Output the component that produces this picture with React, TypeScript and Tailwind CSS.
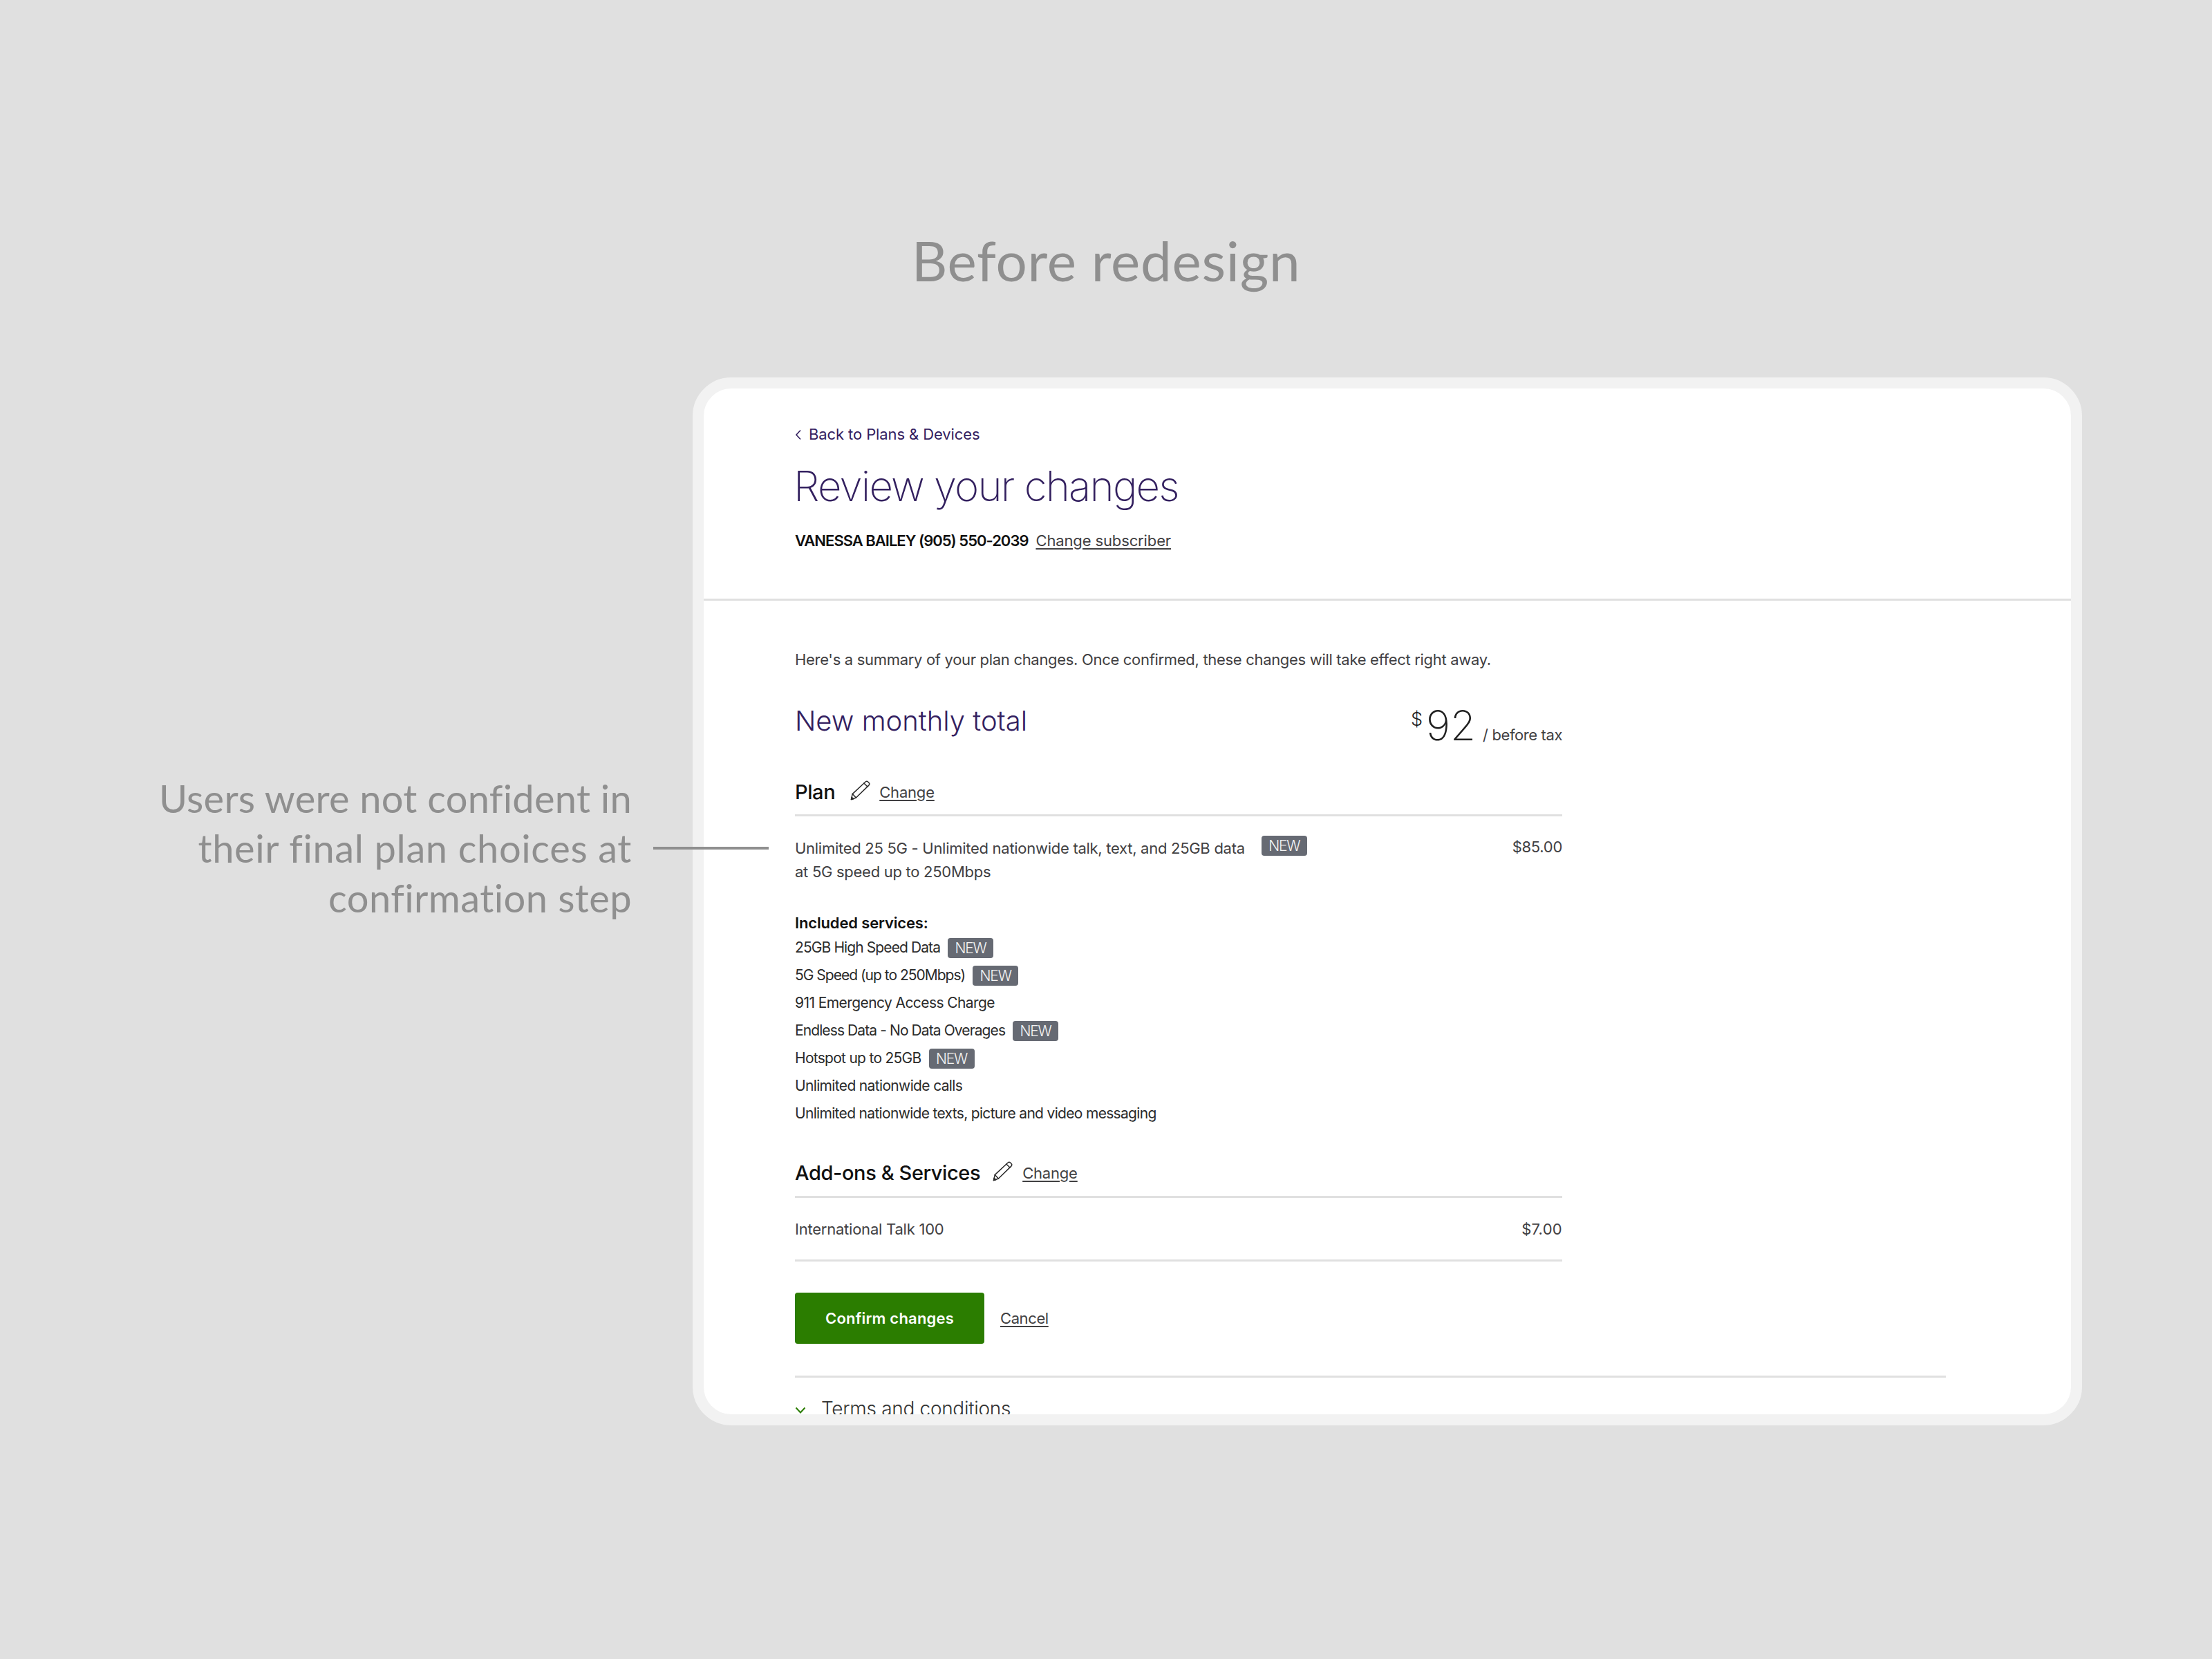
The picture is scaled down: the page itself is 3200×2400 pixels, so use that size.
const Pencil = () => (
  <svg width="29" height="29" viewBox="0 0 29 29" fill="none" stroke="#2b2b2b" strokeWidth="1.5" strokeLinejoin="round" strokeLinecap="round" className="shrink-0">
    <path d="M1.5 27.5 L3.2 19.6 L21.8 2.2 C23 1.1 24.7 1.1 25.9 2.2 L26.9 3.2 C28 4.4 27.9 6 26.8 7.1 L8.4 25 Z" />
    <path d="M3.2 19.6 L8.4 25" />
    <path d="M19.8 4 L25 9" />
    <path d="M1.5 27.5 L2.2 24.2 L4.8 26.8 Z" fill="#2b2b2b" />
  </svg>
);

const Badge = ({ className = "" }: { className?: string }) => (
  <span className={`inline-flex items-center justify-center shrink-0 w-[66px] h-[29px] rounded-[4px] bg-[#666a73] text-[#f4f4f4] text-[21px] font-light tracking-[-1.2px] leading-none ${className}`}>
    NEW
  </span>
);

const services: [string, boolean, string][] = [
  ["25GB High Speed Data", true, "tracking-[-0.9px]"],
  ["5G Speed (up to 250Mbps)", true, "tracking-[-1px]"],
  ["911 Emergency Access Charge", false, "tracking-[-0.58px]"],
  ["Endless Data - No Data Overages", true, "tracking-[-0.9px]"],
  ["Hotspot up to 25GB", true, "tracking-[-0.72px]"],
  ["Unlimited nationwide calls", false, "tracking-[-0.65px]"],
  ["Unlimited nationwide texts, picture and video messaging", false, "tracking-[-0.68px]"],
];

export default function App() {
  return (
    <div className="relative w-[3200px] h-[2400px] bg-[#e0e0e0] pt-[326px] overflow-hidden font-['Inter',sans-serif]">
      <h2 className="h-[100px] flex items-center justify-center text-[80px] text-[#8f8f8f] font-['Lato',sans-serif] tracking-[0.7px]">
        Before redesign
      </h2>

      <div className="flex mt-[120px]">
        <p className="w-[914px] shrink-0 mt-[573px] text-right text-[56px] leading-[72px] text-[#8f8f8f] font-['Lato',sans-serif] [font-variant-ligatures:none]">
          <span className="tracking-[0.25px]">Users were not confident in</span>
          <br />
          <span className="tracking-[0.62px]">their final plan choices at</span>
          <br />
          <span className="tracking-[0.42px]">confirmation step</span>
        </p>

        <div className="ml-[88px] w-[2010px] h-[1516px] border-[16px] border-[#f2f2f2] rounded-[56px] bg-white overflow-hidden text-[#414042]">
          <header className="px-[132px] pt-[50px] pb-[68px] border-b-[3px] border-[#e0e0e0]">
            <a className="flex items-center h-[32px] text-[#33205f] text-[22px] tracking-[-0.1px]">
              <svg width="10" height="16" viewBox="0 0 10 16" fill="none" stroke="#33205f" strokeWidth="1.6" className="mr-[10px] mt-[2px]">
                <path d="M8 1.5 L2 8 L8 14.5" />
              </svg>
              Back to Plans &amp; Devices
            </a>
            <h1 className="mt-[19px] -ml-[2px] h-[80px] flex items-center text-[60px] text-[#33205f] font-extralight tracking-[-1.8px]">
              Review your changes
            </h1>
            <div className="mt-[23px] h-[32px] flex items-center text-[22px]">
              <span className="font-semibold text-[#111111] tracking-[-1px]">VANESSA BAILEY (905) 550-2039</span>
              <a className="ml-[11px] underline underline-offset-[3px] tracking-[-0.13px]">Change subscriber</a>
            </div>
          </header>

          <main className="px-[132px]">
            <div className="w-[1110px]">
              <p className="mt-[69px] h-[32px] flex items-center text-[22px] tracking-[-0.31px] whitespace-nowrap">
                Here's a summary of your plan changes. Once confirmed, these changes will take effect right away.
              </p>

              <div className="mt-[43px] h-[60px] flex items-center justify-between">
                <h2 className="text-[40px] text-[#33205f] font-light">New monthly total</h2>
                <div className="flex items-baseline text-[#1f1f1f] translate-y-[6px]">
                  <span className="text-[27px] font-light self-start mt-[2px] mr-[5px]">$</span>
                  <span className="text-[60px] font-extralight leading-[60px]">92</span>
                  <span className="ml-[10px] text-[22px] text-[#414042] tracking-[-0.4px]">/ before tax</span>
                </div>
              </div>

              <div className="mt-[53px] pb-[12px] border-b-[3px] border-[#e0e0e0] h-[55px] flex items-start">
                <div className="h-[40px] flex items-center">
                  <span className="text-[29px] font-medium text-[#111111] tracking-[-0.4px]">Plan</span>
                  <span className="ml-[22px] mb-[6px]"><Pencil /></span>
                  <a className="ml-[13px] text-[22px] underline underline-offset-[3px] tracking-[-0.2px]">Change</a>
                </div>
              </div>

              <div className="mt-[28px] flex justify-between text-[22px] leading-[33px] tracking-[-0.28px]">
                <div>
                  <div className="flex items-center">
                    Unlimited 25 5G - Unlimited nationwide talk, text, and 25GB data
                    <Badge className="ml-[24px] mb-[7px]" />
                  </div>
                  <div>at 5G speed up to 250Mbps</div>
                </div>
                <span>$85.00</span>
              </div>

              <p className="mt-[41px] h-[32px] flex items-center text-[22px] font-semibold text-[#111111] tracking-[-0.15px]">Included services:</p>
              <ul className="mt-[0px]">
                {services.map(([name, isNew, track]) => (
                  <li key={name} className={`h-[40px] flex items-center gap-[11px] text-[21px] text-[#2b2b2b] ${track}`}>
                    {name}
                    {isNew && <Badge />}
                  </li>
                ))}
              </ul>

              <div className="mt-[46px] pb-[12px] border-b-[3px] border-[#e0e0e0] h-[56px]">
                <div className="h-[40px] flex items-center">
                  <span className="text-[29px] font-medium text-[#111111] tracking-[-0.4px]">Add-ons &amp; Services</span>
                  <span className="ml-[18px] mb-[6px]"><Pencil /></span>
                  <a className="ml-[14px] text-[22px] underline underline-offset-[3px] tracking-[-0.2px]">Change</a>
                </div>
              </div>

              <div className="mt-[29px] h-[32px] flex items-center justify-between text-[22px] tracking-[-0.23px]">
                <span>International Talk 100</span>
                <span className="tracking-[0.3px]">$7.00</span>
              </div>
              <div className="mt-[28px] border-b-[3px] border-[#e0e0e0]" />

              <div className="mt-[45px] flex items-center">
                <button className="w-[274px] h-[74px] rounded-[4px] bg-[#2b7d00] text-white text-[22px] font-semibold tracking-[0.2px]">
                  Confirm changes
                </button>
                <a className="ml-[23px] text-[22px] underline underline-offset-[3px] tracking-[-0.4px]">Cancel</a>
              </div>
            </div>

            <div className="w-[1665px] mt-[46px] border-b-[3px] border-[#e0e0e0]" />
            <div className="mt-[25px] h-[40px] flex items-center text-[28px] text-[#333333] font-light tracking-[-0.3px]">
              <svg width="16" height="10" viewBox="0 0 16 10" fill="none" stroke="#2b7d00" strokeWidth="2" className="mr-[22px] mt-[4px]">
                <path d="M1.5 1.5 L8 8.5 L14.5 1.5" />
              </svg>
              Terms and conditions
            </div>
          </main>
        </div>
      </div>

      <div className="absolute left-[945px] top-[1225px] w-[167px] h-[4px] bg-[#8f8f8f]" />
    </div>
  );
}
